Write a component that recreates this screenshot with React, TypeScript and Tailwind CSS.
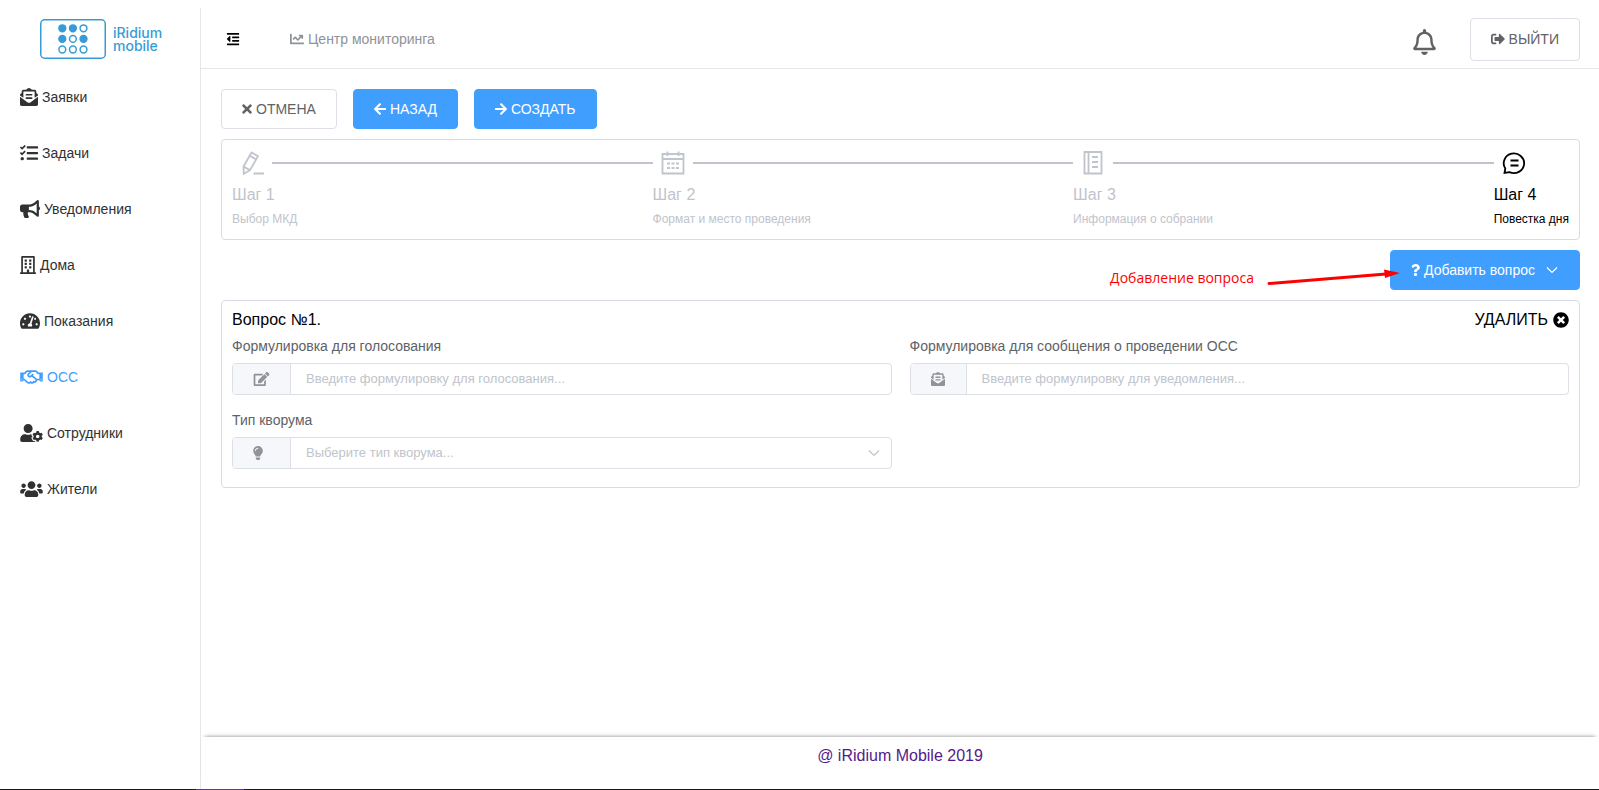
import { useState } from 'react';
import type { ReactNode } from 'react';
import type { IconType } from 'react-icons';
import {
  FaArrowLeft,
  FaArrowRight,
  FaBullhorn,
  FaChartLine,
  FaEdit,
  FaEnvelopeOpenText,
  FaLightbulb,
  FaOutdent,
  FaQuestion,
  FaRegBell,
  FaRegBuilding,
  FaRegHandshake,
  FaSignOutAlt,
  FaTachometerAlt,
  FaTasks,
  FaTimes,
  FaTimesCircle,
  FaUserCog,
  FaUsers,
} from 'react-icons/fa';

const menu: { label: string; icon: IconType; size: string; active?: boolean }[] = [
  { label: 'Заявки', icon: FaEnvelopeOpenText, size: 'w-[18px]' },
  { label: 'Задачи', icon: FaTasks, size: 'w-[18px]' },
  { label: 'Уведомления', icon: FaBullhorn, size: 'w-5' },
  { label: 'Дома', icon: FaRegBuilding, size: 'w-4' },
  { label: 'Показания', icon: FaTachometerAlt, size: 'w-5' },
  { label: 'ОСС', icon: FaRegHandshake, size: 'w-[23px]', active: true },
  { label: 'Сотрудники', icon: FaUserCog, size: 'w-[23px]' },
  { label: 'Жители', icon: FaUsers, size: 'w-[23px]' },
];

const dots = [
  [true, true, false],
  [true, false, true],
  [false, false, false],
];

function Logo() {
  return (
    <a href="#" className="flex items-center gap-[7px] pl-10 text-[#389bd6]">
      <svg className="h-10 w-[66px]" viewBox="0 0 66 40" fill="none" stroke="currentColor">
        <rect x="0.75" y="0.75" width="64.5" height="38.5" rx="4" strokeWidth="1.5" />
        {dots.map((row, y) =>
          row.map((filled, x) => (
            <circle
              key={`${x}-${y}`}
              cx={22.3 + x * 10.6}
              cy={9.3 + y * 10.6}
              r="3.4"
              strokeWidth="1.5"
              fill={filled ? 'currentColor' : 'none'}
            />
          ))
        )}
      </svg>
      <span className="flex flex-col font-['Inter',sans-serif] text-sm font-medium leading-[13px]">
        <span>iRidium</span>
        <span>mobile</span>
      </span>
    </a>
  );
}

function Sidebar() {
  return (
    <aside className="mt-2 w-[201px] shrink-0 border-r border-[#e6e6e6] pt-[11px]">
      <Logo />
      <nav className="mt-[10px]">
        {menu.map(({ label, icon: Icon, size, active }) => (
          <a
            key={label}
            href="#"
            className={`flex h-14 items-center gap-1 pl-5 text-sm ${active ? 'text-[#409eff]' : 'text-[#303133]'}`}
          >
            <Icon className={`h-[18px] ${size}`} />
            {label}
          </a>
        ))}
      </nav>
    </aside>
  );
}

function Header() {
  return (
    <header className="mt-2 flex h-[61px] items-center border-b border-[#e6e6e6] pl-5 pr-[19px] pt-[2px]">
      <button aria-label="Свернуть меню" className="ml-[5px] text-black">
        <FaOutdent className="size-[14px]" />
      </button>
      <a href="#" className="ml-[50px] flex items-center gap-1 text-sm text-[#909399]">
        <FaChartLine className="size-[14px]" />
        Центр мониторинга
      </a>
      <button aria-label="Уведомления" className="ml-auto mr-[34px] pt-[6px] text-[#606266]">
        <FaRegBell className="h-[26px] w-[23px]" />
      </button>
      <button className="flex h-[43px] items-center gap-1 rounded border border-[#dcdfe6] px-5 text-sm text-[#606266]">
        <FaSignOutAlt className="size-[14px]" />
        ВЫЙТИ
      </button>
    </header>
  );
}

function Button({ primary, children }: { primary?: boolean; children: ReactNode }) {
  return (
    <button
      className={`flex h-10 items-center gap-1 rounded border px-5 text-sm ${
        primary ? 'border-[#409eff] bg-[#409eff] text-white' : 'border-[#dcdfe6] bg-white text-[#606266]'
      }`}
    >
      {children}
    </button>
  );
}

const steps = [
  {
    title: 'Шаг 1',
    text: 'Выбор МКД',
    icon: <path d="M3.5 15.5 11.500 1.500l6.500 3.700-8 14L3.800 22.800zM9.800 4.800l6.300 3.600M3.500 15.500l6.300 3.600M13.500 22.500h10.500" />,
  },
  {
    title: 'Шаг 2',
    text: 'Формат и место проведения',
    icon: <path d="M1.5 3h21v19.500h-21zM1.5 8h21M6.5 .5v4.500M17.500 .5v4.500M6 12.500h3M10.500 12.500h3M15 12.500h3M6 17h3M10.500 17h3M15 17h3" />,
  },
  {
    title: 'Шаг 3',
    text: 'Информация о собрании',
    icon: <path d="M3.500 1h17v21.500h-17zM7.500 1v21.500M11 6h6M11 11h6M11 16h6" />,
  },
  {
    title: 'Шаг 4',
    text: 'Повестка дня',
    icon: <path d="M2.500 22l.8-4.500a10.200 9.800 0 1 1 4.200 3.600zM8.500 9.500h8M8.500 14.500h8" />,
  },
];

function Steps() {
  return (
    <section className="mt-[10px] flex h-[101px] rounded border border-[#d8dce5] px-[10px] pt-[10px]">
      {steps.map((step, i) => {
        const last = i === steps.length - 1;
        return (
          <div key={step.title} className={last ? 'shrink-0 text-black' : 'min-w-0 flex-1 text-[#c0c4cc]'}>
            <div className="flex h-[26px] items-center">
              <svg className="mx-2 size-6 shrink-0" viewBox="0 0 24 24" fill="none" stroke="currentColor" strokeWidth="1.800">
                {step.icon}
              </svg>
              {!last && <div className="h-[2px] flex-1 bg-[#c0c4cc]" />}
            </div>
            <div className="text-base leading-[37px]">{step.title}</div>
            <div className="text-xs leading-3">{step.text}</div>
          </div>
        );
      })}
    </section>
  );
}

function Chevron({ className }: { className: string }) {
  return (
    <svg className={className} viewBox="0 0 14 14" fill="none" stroke="currentColor" strokeWidth="1.200">
      <path d="M2 4.500 7 9.500l5-5" />
    </svg>
  );
}

function Field({ id, label, icon, children }: { id: string; label: string; icon: ReactNode; children: ReactNode }) {
  return (
    <div>
      <label htmlFor={id} className="block text-sm leading-[34px] text-[#606266]">
        {label}
      </label>
      <div className="flex h-8 overflow-hidden rounded border border-[#dcdfe6] text-[13px]">
        <span className="flex min-w-14 shrink-0 items-center border-r border-[#dcdfe6] bg-[#f5f7fa] px-5 text-[#909399]">
          {icon}
        </span>
        {children}
      </div>
    </div>
  );
}

function Question() {
  const [type, setType] = useState('');

  return (
    <section className="mt-[10px] rounded border border-[#d8dce5] px-[10px] pb-[18px] pt-[10px]">
      <div className="flex items-center justify-between text-base leading-[18px] text-black">
        <h2>Вопрос №1.</h2>
        <button className="flex items-center gap-[5px]">
          УДАЛИТЬ <FaTimesCircle />
        </button>
      </div>
      <div className="grid grid-cols-2 gap-x-[18px] gap-y-2">
        <Field id="vote" label="Формулировка для голосования" icon={<FaEdit className="h-[14px] w-[17px]" />}>
          <input
            id="vote"
            className="w-full px-[15px] outline-none placeholder:text-[#c0c4cc]"
            placeholder="Введите формулировку для голосования..."
          />
        </Field>
        <Field
          id="notice"
          label="Формулировка для сообщения о проведении ОСС"
          icon={<FaEnvelopeOpenText className="size-[14px]" />}
        >
          <input
            id="notice"
            className="w-full px-[15px] outline-none placeholder:text-[#c0c4cc]"
            placeholder="Введите формулировку для уведомления..."
          />
        </Field>
        <Field id="quorum" label="Тип кворума" icon={<FaLightbulb className="mr-[7px] h-[14px] w-[10px]" />}>
          <div className="relative flex-1">
            <select
              id="quorum"
              value={type}
              onChange={(e) => setType(e.target.value)}
              className="size-full appearance-none px-[15px] text-[#c0c4cc] outline-none"
            >
              <option value="">Выберите тип кворума...</option>
            </select>
            <Chevron className="pointer-events-none absolute right-[10px] top-2 size-[14px] text-[#c0c4cc]" />
          </div>
        </Field>
      </div>
    </section>
  );
}

export default function App() {
  return (
    <div className="flex min-h-screen flex-col bg-white font-['Liberation_Sans',Arial,sans-serif]">
      <div className="flex flex-1">
        <Sidebar />
        <div className="flex min-w-0 flex-1 flex-col">
          <Header />
          <main className="flex-1 pl-5 pr-[19px] pt-5">
            <div className="flex gap-4">
              <Button>
                <FaTimes className="h-[14px] w-[10px]" />
                ОТМЕНА
              </Button>
              <Button primary>
                <FaArrowLeft className="h-[14px] w-3" />
                НАЗАД
              </Button>
              <Button primary>
                <FaArrowRight className="h-[14px] w-3" />
                СОЗДАТЬ
              </Button>
            </div>
            <Steps />
            <div className="relative mt-[10px] flex justify-end">
              <Button primary>
                <FaQuestion className="h-[14px] w-[9px]" />
                Добавить вопрос
                <Chevron className="ml-[6px] size-[14px]" />
              </Button>
              <div className="pointer-events-none absolute right-[180px] top-4 flex items-start text-[#ff0000]">
                <span className="mr-3 pt-[2px] font-['Open_Sans',sans-serif] text-sm leading-5">Добавление вопроса</span>
                <svg className="h-5 w-[134px]" viewBox="0 0 134 20">
                  <path d="M3 17.500 120 8" stroke="currentColor" strokeWidth="3" strokeLinecap="round" />
                  <path d="M118 3.500l16 3.500-15 5z" fill="currentColor" />
                </svg>
              </div>
            </div>
            <Question />
          </main>
          <footer className="h-[52px] pt-[7px] text-center text-base shadow-[0_-4px_4px_-4px_rgba(0,0,0,0.5)]">
            <a href="#" className="text-[#551a8b]">
              @ iRidium Mobile 2019
            </a>
          </footer>
        </div>
      </div>
      <div className="h-px bg-[#1a1a1a] pl-[196px]">
        <div className="h-px w-12 bg-[#5b3a99]" />
      </div>
    </div>
  );
}
